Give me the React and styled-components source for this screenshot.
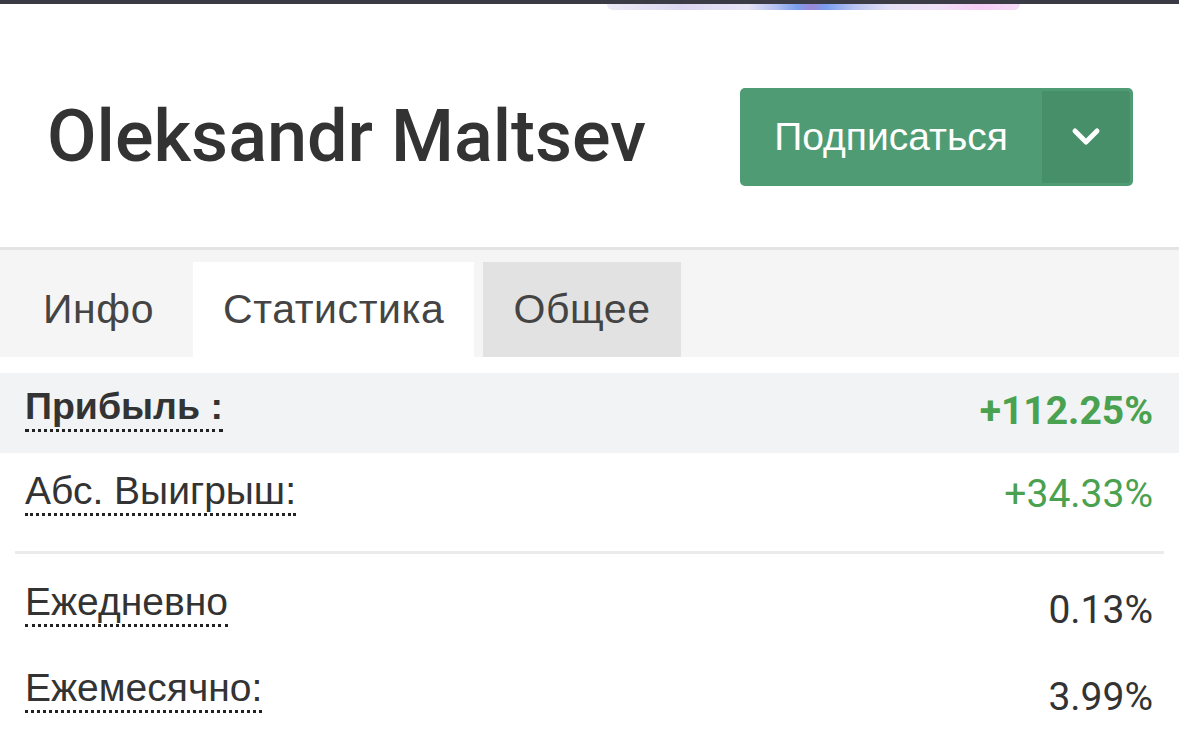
import React from 'react';
import styled, { createGlobalStyle } from 'styled-components';

const GlobalStyle = createGlobalStyle`
  html, body {
    margin: 0;
    padding: 0;
    background: #fff;
  }
  body {
    font-family: 'Liberation Sans', Arial, sans-serif;
    color: #333;
  }
`;

const stats = [
  { label: 'Прибыль :', value: '+112.25%', tone: 'green', strong: true, top: 11, bottom: 0, drop: 5 },
  { label: 'Абс. Выигрыш:', value: '+34.33%', tone: 'green', top: 15, bottom: 34, drop: 4 },
  { label: 'Ежедневно', value: '0.13%', top: 25, bottom: 0, drop: 9, divided: true },
  { label: 'Ежемесячно:', value: '3.99%', top: 32, bottom: 20, drop: 10 },
];

const tabs = [
  { title: 'Инфо' },
  { title: 'Статистика', state: 'active' },
  { title: 'Общее', state: 'hover' },
];

const App = () => {
  return (
    <Page>
      <GlobalStyle />
      <TopBar />
      <Banner />
      <Header>
        <Title>Oleksandr Maltsev</Title>
        <SubscribeButton>
          <SubscribeLabel>Подписаться</SubscribeLabel>
          <Caret>
            <svg width="32" height="20" viewBox="0 0 32 20">
              <polyline
                points="5,4 16,15 27,4"
                fill="none"
                stroke="#fff"
                strokeWidth="5"
                strokeLinecap="round"
                strokeLinejoin="round"
              />
            </svg>
          </Caret>
        </SubscribeButton>
      </Header>
      <TabBar>
        {tabs.map((t) => (
          <Tab key={t.title} $state={t.state}>
            {t.title}
          </Tab>
        ))}
      </TabBar>
      <Stats>
        {stats.map((s) => (
          <React.Fragment key={s.label}>
            {s.divided && <Divider />}
            <StatRow $highlight={s.strong} $top={s.top} $bottom={s.bottom}>
              <StatLabel $strong={s.strong}>{s.label}</StatLabel>
              <StatValue $tone={s.tone} $strong={s.strong} $drop={s.drop}>
                {s.value}
              </StatValue>
            </StatRow>
          </React.Fragment>
        ))}
      </Stats>
    </Page>
  );
};

export default App;

const Page = styled.div`
  width: 100%;
  min-height: 736px;
  overflow: hidden;
`;

const TopBar = styled.div`
  height: 4px;
  background: #3b3b46;
`;

const Banner = styled.div`
  width: 413px;
  height: 6px;
  margin-left: 607px;
  border-radius: 0 0 8px 8px;
  background: linear-gradient(
    90deg,
    #eceaf7 0%,
    #dcd7f1 18%,
    #e8e4f6 34%,
    #b3c0f0 41%,
    #7a9fee 46%,
    #9c86d8 49.5%,
    #7a9fee 53%,
    #b9c4f1 60%,
    #e3dff5 68%,
    #f0e0f6 80%,
    #f5cdf5 90%,
    #f6dcf7 100%
  );
`;

const Header = styled.div`
  display: flex;
  align-items: center;
  justify-content: space-between;
  padding: 78px 46px 61px 47px;
  border-bottom: 3px solid #e4e4e4;
`;

const Title = styled.h1`
  margin: 0;
  font-family: Roboto, 'Liberation Sans', sans-serif;
  font-weight: 500;
  font-size: 72px;
  line-height: 1;
  color: #333;
`;

const SubscribeButton = styled.button`
  display: flex;
  align-items: stretch;
  width: 393px;
  height: 98px;
  padding: 0;
  border: none;
  border-radius: 5px;
  background: #4f9c74;
  cursor: pointer;
`;

const SubscribeLabel = styled.span`
  flex: 1;
  display: flex;
  align-items: center;
  justify-content: center;
  font-family: 'Liberation Sans', Arial, sans-serif;
  font-size: 39px;
  color: #fff;
`;

const Caret = styled.span`
  width: 88px;
  margin: 3px 3px 3px 0;
  display: flex;
  align-items: center;
  justify-content: center;
  background: #468f69;
  border-radius: 0 3px 3px 0;
`;

const TabBar = styled.div`
  display: flex;
  gap: 9px;
  height: 95px;
  padding: 12px 0 0 13px;
  background: #f5f5f5;
`;

const Tab = styled.div`
  display: flex;
  align-items: center;
  padding: 0 30px;
  font-family: 'Liberation Sans', Arial, sans-serif;
  font-size: 41px;
  letter-spacing: 0.6px;
  color: #444;
  background: ${(p) =>
    p.$state === 'active' ? '#fff' : p.$state === 'hover' ? '#e2e2e2' : 'transparent'};
`;

const Stats = styled.div`
  display: flex;
  flex-direction: column;
  padding-top: 16px;
`;

const StatRow = styled.div`
  display: flex;
  align-items: flex-start;
  justify-content: space-between;
  padding: ${(p) => p.$top}px 26px ${(p) => p.$bottom}px 25px;
  ${(p) => (p.$highlight ? 'height: 80px; box-sizing: border-box; background: #f2f3f5;' : '')}
`;

const StatLabel = styled.span`
  font-family: 'Liberation Sans', Arial, sans-serif;
  font-size: ${(p) => (p.$strong ? 37.5 : 39)}px;
  line-height: 45px;
  font-weight: ${(p) => (p.$strong ? 700 : 400)};
  color: #333;
  border-bottom: 3px dotted #222;
`;

const StatValue = styled.span`
  margin-top: ${(p) => p.$drop}px;
  font-family: Roboto, 'Liberation Sans', sans-serif;
  font-size: 39px;
  line-height: 45px;
  font-weight: ${(p) => (p.$strong ? 700 : 400)};
  color: ${(p) => (p.$tone === 'green' ? '#4aa14f' : '#333')};
`;

const Divider = styled.div`
  height: 3px;
  margin: 0 15px;
  background: #ebebeb;
`;
